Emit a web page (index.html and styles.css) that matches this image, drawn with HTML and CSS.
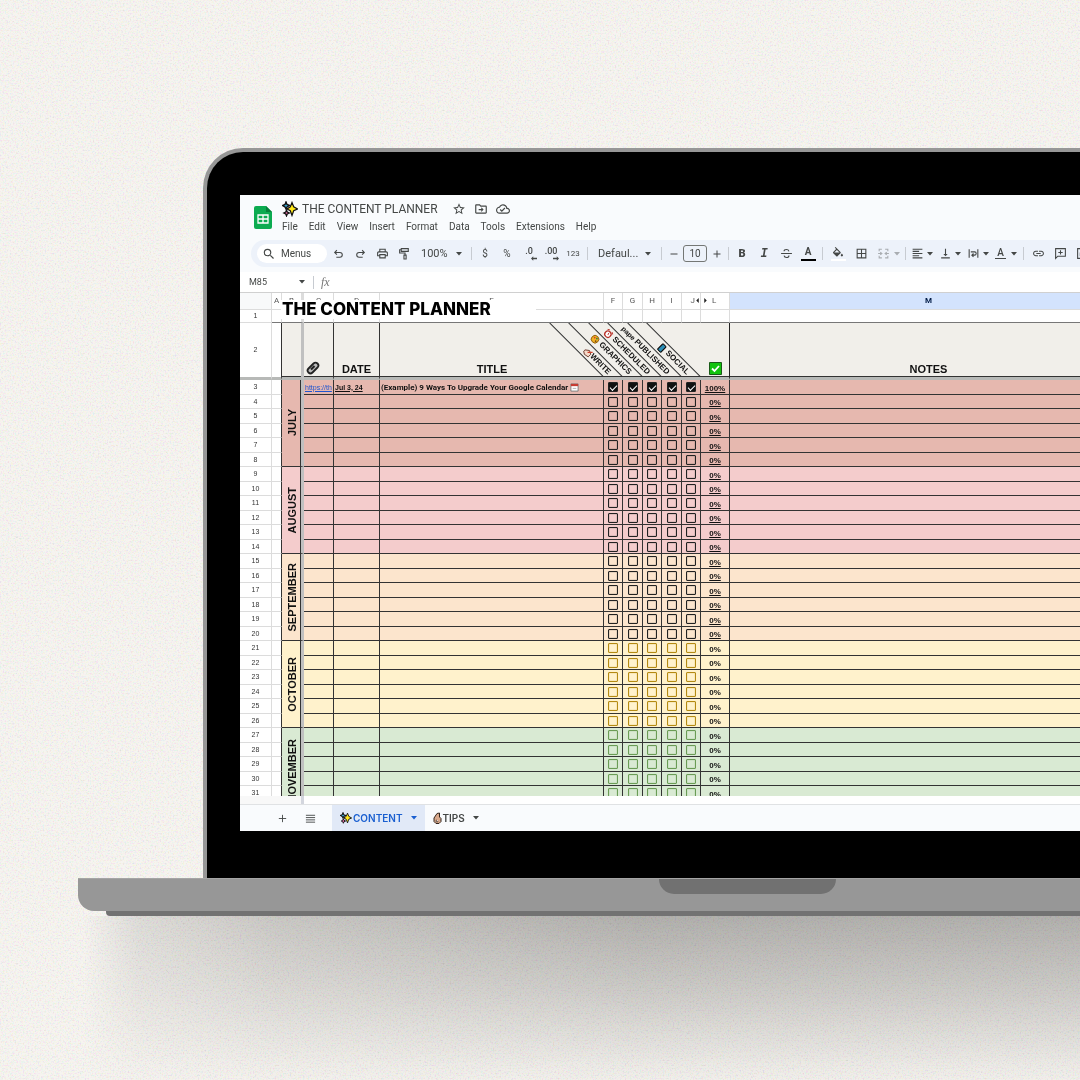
FILE: index.html
```html
<!DOCTYPE html>
<html lang="en">
<head>
<meta charset="utf-8">
<title>The Content Planner</title>
<link rel="stylesheet" href="styles.css">
</head>
<body>
<svg class="grain" aria-hidden="true">
  <filter id="grain" x="0" y="0" width="100%" height="100%" color-interpolation-filters="sRGB">
    <feTurbulence type="fractalNoise" baseFrequency="0.6" numOctaves="2" seed="4"/>
    <feColorMatrix values="1 0 0 0 0  0 1 0 0 0  0 0 1 0 0  0 0 0 0 1"/>
  </filter>
  <rect width="100%" height="100%" filter="url(#grain)"/>
</svg>

<svg class="defs" aria-hidden="true">
  <symbol id="caret" viewBox="0 0 6 4"><path d="M0 0h6L3 3.5z" fill="currentColor"/></symbol>
  <symbol id="sparkles" viewBox="0 0 16 16">
    <path d="M4 1l1 2.500 2.500 1L5 6 4 8 3 6 .5 4.500 3 3.500z" fill="#39a9d8" stroke="#111" stroke-width="1.400"/>
    <path d="M4.500 9l.8 2 2.200 1-2.200 1-.8 2-.8-2-2-1 2-1z" fill="#e86aa6" stroke="#111" stroke-width="1.200"/>
    <path d="M10 1.500l1.700 4.300L15.500 8l-3.800 1.700L10 14.500 8.300 9.700 5 8l3.300-2.200z" fill="#ffe81a" stroke="#111" stroke-width="1.200"/>
  </symbol>
</svg>

<main class="laptop">
  <div class="lid">
    <div class="screen">
      <header class="head">
        <svg class="logo" viewBox="0 0 18 23"><path d="M2 0h10l6 6v15a2 2 0 0 1-2 2H2a2 2 0 0 1-2-2V2a2 2 0 0 1 2-2z" fill="#0cab50"/><path d="M12 0l6 6h-6z" fill="#07813b"/><path d="M4 9h10v8H4zM9 9v8M4 13h10" fill="none" stroke="#fff" stroke-width="1.300"/></svg>
        <div class="head-main">
          <div class="title-row">
            <svg class="emoji-lg" aria-hidden="true"><use href="#sparkles"/></svg>
            <h1 class="doc-title">THE CONTENT PLANNER</h1>
            <button class="title-btn" aria-label="Star"><svg viewBox="0 0 24 24"><path d="M22 9.240l-7.190-.620L12 2 9.190 8.630 2 9.240l5.460 4.730L5.820 21 12 17.270 18.180 21l-1.630-7.030L22 9.240zM12 15.400l-3.760 2.270 1-4.280-3.320-2.880 4.380-.380L12 6.100l1.710 4.040 4.380.380-3.320 2.880 1 4.280L12 15.400z"/></svg></button>
            <button class="title-btn" aria-label="Move"><svg viewBox="0 0 24 24"><path d="M20 6h-8l-2-2H4c-1.100 0-2 .9-2 2v12c0 1.100.9 2 2 2h16c1.100 0 2-.9 2-2V8c0-1.100-.9-2-2-2zm0 12H4V6h5.170l2 2H20v10zm-7.500-1 4-4-4-4v3H8v2h4.500z"/></svg></button>
            <button class="title-btn" aria-label="Saved to Drive"><svg viewBox="0 0 24 24"><path d="M19.350 10.040C18.670 6.590 15.640 4 12 4 9.110 4 6.600 5.640 5.350 8.040 2.340 8.360 0 10.910 0 14c0 3.310 2.690 6 6 6h13c2.760 0 5-2.240 5-5 0-2.640-2.050-4.780-4.650-4.960zM19 18H6c-2.210 0-4-1.790-4-4 0-2.050 1.530-3.760 3.560-3.970l1.070-.110.5-.950C8.080 7.140 9.940 6 12 6c2.620 0 4.880 1.860 5.390 4.430l.3 1.500 1.530.110c1.560.1 2.780 1.410 2.780 2.960 0 1.650-1.350 3-3 3zm-9-3.820l-2.090-2.090L6.500 13.500 10 17l6.010-6.010-1.410-1.410z"/></svg></button>
          </div>
          <nav class="menu">
            <button>File</button><button>Edit</button><button>View</button><button>Insert</button><button>Format</button><button>Data</button><button>Tools</button><button>Extensions</button><button>Help</button>
          </nav>
        </div>
      </header>

      <div class="toolbar" role="toolbar" aria-label="Formatting">
        <button class="menus"><svg viewBox="0 0 24 24"><path d="M15.500 14h-.790l-.280-.270A6.470 6.470 0 0 0 16 9.500 6.500 6.500 0 1 0 9.500 16c1.610 0 3.090-.590 4.230-1.570l.270.280v.790l5 4.990L20.490 19l-4.990-5zm-6 0a4.500 4.500 0 1 1 0-9 4.500 4.500 0 0 1 0 9z"/></svg>Menus</button>
        <button class="tool" aria-label="Undo"><svg viewBox="0 0 24 24" class="line"><path d="M9 6L5 10l4 4M5 10h9.500a4.500 4.500 0 0 1 0 9H8"/></svg></button>
        <button class="tool" aria-label="Redo"><svg viewBox="0 0 24 24" class="line"><path d="M15 6l4 4-4 4M19 10H9.500a4.500 4.500 0 0 0 0 9H16"/></svg></button>
        <button class="tool" aria-label="Print"><svg viewBox="0 0 24 24"><path d="M19 8h-1V3H6v5H5c-1.660 0-3 1.340-3 3v6h4v4h12v-4h4v-6c0-1.660-1.340-3-3-3zM8 5h8v3H8V5zm8 12v2H8v-4h8v2zm2-2v-2H6v2H4v-4c0-.550.450-1 1-1h14c.550 0 1 .450 1 1v4h-2z"/></svg></button>
        <button class="tool" aria-label="Paint format"><svg viewBox="0 0 24 24" class="line"><path d="M6 3h13v5H6zM6 5H3v6h10v4M11 15h4v7h-4z"/></svg></button>
        <label class="pick pick-zoom"><select aria-label="Zoom"><option>100%</option></select><svg class="caret"><use href="#caret"/></svg></label>
        <span class="sep"></span>
        <button class="tool text-tool" aria-label="Currency">$</button>
        <button class="tool text-tool" aria-label="Percent">%</button>
        <button class="tool decimal" aria-label="Fewer decimals">.0<svg viewBox="0 0 8 6"><path d="M3 0L0 3l3 3V4h5V2H3z"/></svg></button>
        <button class="tool decimal" aria-label="More decimals">.00<svg viewBox="0 0 8 6"><path d="M5 0l3 3-3 3V4H0V2h5z"/></svg></button>
        <button class="tool small-tool" aria-label="More formats">123</button>
        <span class="sep wide"></span>
        <label class="pick pick-font"><select aria-label="Font"><option>Defaul...</option></select><svg class="caret"><use href="#caret"/></svg></label>
        <span class="sep"></span>
        <button class="tool step" aria-label="Decrease size"><svg viewBox="0 0 24 24" class="line"><path d="M5 12h14"/></svg></button>
        <input class="size" aria-label="Font size" value="10">
        <button class="tool step" aria-label="Increase size"><svg viewBox="0 0 24 24" class="line"><path d="M5 12h14M12 5v14"/></svg></button>
        <span class="sep"></span>
        <button class="tool bold" aria-label="Bold">B</button>
        <button class="tool italic" aria-label="Italic">I</button>
        <button class="tool" aria-label="Strikethrough"><svg viewBox="0 0 24 24" class="line"><path d="M2 12h20M16.500 8c-.5-2-2-3.500-4.500-3.500S7.500 6 7.500 8M7.500 16c.5 2.500 2 3.500 4.500 3.500s4.500-1.500 4.500-4"/></svg></button>
        <button class="tool color" aria-label="Text color">A</button>
        <span class="sep wide"></span>
        <button class="tool fill" aria-label="Fill color"><svg viewBox="0 0 24 18"><path d="M16.560 8.940L7.620 0 6.210 1.410l2.380 2.380-5.150 5.150c-.590.590-.590 1.540 0 2.120l5.500 5.500c.290.290.680.440 1.060.440s.770-.150 1.060-.440l5.500-5.500c.590-.580.590-1.530 0-2.120zM19 11.500s-2 2.170-2 3.500c0 1.100.9 2 2 2s2-.9 2-2c0-1.330-2-3.500-2-3.500zM10 5.210L5.210 10h9.580z" fill-rule="evenodd"/></svg></button>
        <button class="tool" aria-label="Borders"><svg viewBox="0 0 24 24"><path d="M3 3v18h18V3H3zm8 16H5v-6h6v6zm0-8H5V5h6v6zm8 8h-6v-6h6v6zm0-8h-6V5h6v6z"/></svg></button>
        <button class="tool merge" aria-label="Merge cells"><svg viewBox="0 0 24 24" class="line"><path d="M9 4H4v4M15 4h5v4M9 20H4v-4M15 20h5v-4M2 12h6M22 12h-6M6 9.500L9 12l-3 2.500M18 9.500L15 12l3 2.500"/></svg></button>
        <span class="caret-slot"><svg class="caret"><use href="#caret"/></svg></span>
        <span class="sep"></span>
        <button class="drop" aria-label="Horizontal align"><svg viewBox="0 0 24 24" class="line"><path d="M3 4h18M3 8h12M3 12h18M3 16h12M3 20h18"/></svg><svg class="caret"><use href="#caret"/></svg></button>
        <button class="drop" aria-label="Vertical align"><svg viewBox="0 0 24 24"><path d="M16 13h-3V3h-2v10H8l4 4 4-4zM4 19v2h16v-2H4z"/></svg><svg class="caret"><use href="#caret"/></svg></button>
        <button class="drop" aria-label="Text wrapping"><svg viewBox="0 0 24 24" class="line"><path d="M4 4v16M20 4v16M7 9h7a3 3 0 0 1 0 6H9M12 12l-3 3 3 3"/></svg><svg class="caret"><use href="#caret"/></svg></button>
        <button class="drop rotate" aria-label="Text rotation"><span>A</span><svg class="caret"><use href="#caret"/></svg></button>
        <span class="sep wide"></span>
        <button class="tool" aria-label="Insert link"><svg viewBox="0 0 24 24"><path d="M3.900 12c0-1.710 1.390-3.100 3.100-3.100h4V7H7c-2.760 0-5 2.240-5 5s2.240 5 5 5h4v-1.900H7c-1.710 0-3.100-1.390-3.100-3.100zM8 13h8v-2H8v2zm9-6h-4v1.900h4c1.710 0 3.100 1.390 3.100 3.100s-1.390 3.100-3.100 3.100h-4V17h4c2.760 0 5-2.240 5-5s-2.240-5-5-5z"/></svg></button>
        <button class="tool" aria-label="Insert comment"><svg viewBox="0 0 24 24" class="line"><path d="M3 21V3h18v14H7zM12 6v8M8 10h8"/></svg></button>
        <button class="tool" aria-label="Insert chart"><svg viewBox="0 0 24 24" class="line"><path d="M3 3h18v18H3zM8 10v7M12 7v10M16 13v4"/></svg></button>
      </div>

      <div class="formula">
        <input class="name-box" aria-label="Name box" value="M85">
        <svg class="caret"><use href="#caret"/></svg>
        <span class="sep"></span>
        <span class="fx">fx</span>
      </div>

      <div class="sheet">
        <table class="grid">
          <colgroup><col class="c-num"><col class="c-a"><col class="c-b"><col class="c-c"><col class="c-d"><col class="c-e"><col class="c-19"><col class="c-20"><col class="c-19"><col class="c-20"><col class="c-19"><col class="c-l"><col class="c-m"><col></colgroup>
          <thead>
            <tr class="letters"><th></th><th>A</th><th class="b">B</th><th>C</th><th>D</th><th>E</th><th>F</th><th>G</th><th>H</th><th>I</th><th class="j">J<svg class="tri" viewBox="0 0 3 6"><path d="M3 0v6L0 3z"/></svg></th><th class="l"><svg class="tri" viewBox="0 0 3 6"><path d="M0 0v6l3-3z"/></svg>L</th><th class="picked">M</th><th></th></tr>
            <tr class="first"><th class="num">1</th><td></td><td class="b"></td><td></td><td></td><td></td><td></td><td></td><td></td><td></td><td></td><td></td><td></td><td></td></tr>
            <tr class="names">
              <th class="num">2</th><td class="a"></td><td class="b"></td>
              <th class="clip"><svg viewBox="0 0 14 14" aria-label="Link"><path d="M2.500 7.500l5-5a2.800 2.800 0 0 1 4 4l-5 5a2.800 2.800 0 0 1-4-4z" fill="#bbb" stroke="#222" stroke-width="1.800"/><path d="M5 8.500L8.500 5" stroke="#222" stroke-width="2.200"/></svg></th>
              <th>DATE</th><th class="title-th">TITLE</th>
              <th class="slant"><span><svg viewBox="0 0 10 10"><path d="M1 5l4-3 4 2v4l-5 1-3-2z" fill="#f6d9c8" stroke="#6b3a2d"/><path d="M5 5l4-4" stroke="#d0402b" stroke-width="1.500"/></svg>WRITE</span></th>
              <th class="slant"><span><svg viewBox="0 0 10 10"><circle cx="5" cy="5" r="4.200" fill="#f2b223" stroke="#8a5a10"/><circle cx="3.500" cy="4" r="1" fill="#d7402b"/><circle cx="6" cy="3" r="1" fill="#3c7d3a"/><circle cx="7" cy="6" r="1" fill="#7a4a12"/></svg>&nbsp;GRAPHICS</span></th>
              <th class="slant"><span><svg viewBox="0 0 10 10"><circle cx="5" cy="5.500" r="3.500" fill="#fff" stroke="#b8322a" stroke-width="1.400"/><path d="M1 2l2-1.500M9 2L7 .5M5 3.500v2h1.500" stroke="#b8322a" fill="none"/></svg>&nbsp;SCHEDULED</span></th>
              <th class="slant"><span><small>pape&nbsp;</small>PUBLISHED</span></th>
              <th class="slant"><span><svg viewBox="0 0 10 10"><rect x="3" y=".5" width="5" height="9" rx="1" fill="#2a8fb8" stroke="#111" stroke-width="1.400"/></svg>&nbsp;SOCIAL</span></th>
              <th class="slant done"><svg viewBox="0 0 13 13" aria-label="Done"><path d="M.5.5h12v12H.5z" fill="#12c20e" stroke="#1a5a18"/><path d="M3 6.500l2.500 2.500L10 4" fill="none" stroke="#fff" stroke-width="1.800"/></svg></th>
              <th>NOTES</th><th></th>
            </tr>
          </thead>
          <tbody id="rows"></tbody>
        </table>
        <div class="banner">THE CONTENT PLANNER</div>
      </div>
      <div class="scroll-strip"><span></span></div>

      <footer class="tabs">
        <button class="tab-icon" aria-label="Add sheet"><svg viewBox="0 0 24 24" class="line"><path d="M4 12h16M12 4v16"/></svg></button>
        <button class="tab-icon" aria-label="All sheets"><svg viewBox="0 0 24 24" class="line"><path d="M2 5h20M2 10h20M2 15h20M2 20h20"/></svg></button>
        <button class="tab active"><svg class="emoji-sm"><use href="#sparkles"/></svg>CONTENT<svg class="caret"><use href="#caret"/></svg></button>
        <button class="tab"><svg class="bulb" viewBox="0 0 9 12"><path d="M4 1.500L6.500 1v4L8 6.500v3L6 11.500H3L1 9.500V6z" fill="#d9a98c" stroke="#33241c"/><path d="M4 8a1 1 0 1 0 1 1" fill="#fff" stroke="#33241c" stroke-width=".8"/></svg>TIPS<svg class="caret"><use href="#caret"/></svg></button>
      </footer>
    </div>
  </div>
  <div class="base"><div class="notch"></div></div>
  <div class="foot"></div>
  <div class="shadow"></div>
</main>
<script src="app.js"></script>
</body>
</html>
```
FILE: app.js
```js
// Six planner rows per month, starting at sheet row 3.
const months = ["july", "august", "september", "october", "november"];
const stages = ["Write", "Graphics", "Scheduled", "Published", "Social"];
const calendar = '<svg class="cal" viewBox="0 0 10 10"><path d="M1 1h8v8H1z" fill="#fff" stroke="#777"/><path d="M1 1h8v2.500H1z" fill="#c63b32"/><path d="M3 6h4" stroke="#aaa"/></svg>';

const rows = [];
months.forEach((month, m) => {
  for (let i = 0; i < 6; i++) {
    const n = 3 + m * 6 + i;
    const sample = n === 3;
    const boxes = stages.map(s =>
      `<td><input type="checkbox" aria-label="${s}, row ${n}"${sample ? " checked" : ""}></td>`).join("");
    rows.push(`<tr class="${month}">
      <th class="num">${n}</th><td class="a"></td>
      ${i === 0 ? `<th class="b month" rowspan="6"><span>${month.toUpperCase()}</span></th>` : ""}
      <td class="url">${sample ? '<a href="#">https://th</a>' : ""}</td>
      <td class="date">${sample ? "Jul 3, 24" : ""}</td>
      <td class="name">${sample ? "(Example) 9 Ways To Upgrade Your Google Calendar " + calendar : ""}</td>
      ${boxes}
      <td class="pct">${sample ? "100%" : "0%"}</td><td></td><td></td>
    </tr>`);
  }
});
document.getElementById("rows").innerHTML = rows.join("");
```
FILE: styles.css
```css
* { box-sizing: border-box; }
body {
  margin: 0;
  min-height: 100vh;
  overflow: hidden;
  position: relative;
  background: #f6f4f0;
  font-family: Roboto, "Liberation Sans", sans-serif;
  color: #444746;
}
button, input, select {
  margin: 0;
  padding: 0;
  border: 0;
  background: none;
  color: inherit;
  font: inherit;
}
svg { fill: currentColor; flex: none; display: block; }
.line { fill: none; stroke: currentColor; stroke-width: 2; }
.defs { position: absolute; width: 0; height: 0; }
.grain {
  position: absolute;
  inset: 0;
  width: 100%;
  height: 100%;
  mix-blend-mode: hard-light;
  opacity: .15;
}

/* Laptop */
.laptop { position: relative; width: 124%; padding-top: 148px; margin-left: 78px; }
.lid {
  margin: 0 125px;
  padding: 43px 33px 47px;
  border: 4px solid #979797;
  border-bottom: 0;
  border-radius: 40px 40px 0 0;
  background: #000;
}
.screen { background: #f9fbfd; overflow: hidden; }
.base {
  display: flex;
  justify-content: center;
  height: 33px;
  border-radius: 0 0 16px 16px;
  background: #979797;
  border-top: 1px solid #a5a5a5;
}
.notch { width: 177px; height: 15px; border-radius: 0 0 15px 15px; background: #717171; }
.foot { margin: 0 28px; height: 5px; border-radius: 0 0 4px 4px; background: #727272; }
.shadow {
  height: 165px;
  background: linear-gradient(rgba(0, 0, 0, .28), rgba(0, 0, 0, .17) 45%, rgba(0, 0, 0, .04) 90%, rgba(0, 0, 0, .02));
  -webkit-mask-image: linear-gradient(90deg, transparent 5px, rgba(0, 0, 0, .35) 60px, rgba(0, 0, 0, .65) 200px, #000 560px);
  mask-image: linear-gradient(90deg, transparent 5px, rgba(0, 0, 0, .35) 60px, rgba(0, 0, 0, .65) 200px, #000 560px);
}

/* Document header */
.head { display: flex; gap: 10px; padding: 6px 14px; height: 45px; }
.logo { width: 18px; height: 23px; margin-top: 5px; }
.title-row { display: flex; align-items: center; height: 16px; }
.emoji-lg { width: 16px; height: 16px; margin-right: 4px; }
.doc-title { margin: 0 14px 0 0; font-size: 12px; font-weight: 400; line-height: 16px; }
.title-btn { width: 14px; height: 14px; margin-right: 8px; }
.title-btn svg { width: 14px; height: 14px; }
.menu { display: flex; gap: 11px; height: 16px; margin-top: 2px; font-size: 10px; line-height: 16px; }

/* Toolbar */
.toolbar {
  display: flex;
  align-items: center;
  height: 27px;
  margin: 0 11px 5px;
  padding-left: 6px;
  border-radius: 14px;
  background: #edf2fa;
  font-size: 10px;
}
.toolbar > * { flex: none; }
.menus {
  display: flex;
  align-items: center;
  gap: 5px;
  width: 70px;
  height: 19px;
  padding-left: 5px;
  border-radius: 10px;
  background: #fff;
}
.menus svg { width: 14px; height: 14px; }
.tool { display: flex; align-items: center; justify-content: center; width: 22px; height: 20px; }
.tool svg { width: 13px; height: 13px; }
.sep { width: 1px; height: 13px; margin: 0 2px; background: #c7cbd1; }
.sep.wide { margin: 0 3px; }
.caret { width: 6px; height: 4px; }
.pick { display: flex; align-items: center; padding-left: 6px; }
.pick select { appearance: none; }
.pick-zoom { width: 54px; font-size: 11px; }
.pick-zoom select { width: 35px; }
.pick-font { width: 68px; font-size: 11px; padding-left: 7px; }
.pick-font select { width: 47px; }
.small-tool { font-size: 8px; }
.decimal { position: relative; align-items: flex-start; padding-top: 2px; font-size: 9px; font-weight: 500; }
.decimal svg { position: absolute; right: 3px; bottom: 3px; width: 6px; height: 5px; }
.step { width: 19px; }
.step svg { width: 12px; height: 12px; }
.size { width: 24px; height: 17px; border: 1px solid #747775; border-radius: 3px; text-align: center; }
.bold { font-size: 11px; font-weight: 900; }
.italic { font: italic 700 12px "Liberation Mono", monospace; }
.color { align-items: flex-start; font-size: 10px; line-height: 15px; font-weight: 700; position: relative; }
.color::after { content: ""; position: absolute; bottom: 3px; width: 15px; height: 2px; background: #000; }
.fill { width: 24px; flex-direction: column; gap: 2px; }
.fill svg { width: 14px; height: 10px; }
.fill::after { content: ""; width: 15px; height: 2px; background: #fff; }
.merge, .caret-slot { color: #a9adb1; }
.caret-slot { width: 9px; }
.drop { display: flex; align-items: center; gap: 3px; width: 28px; height: 20px; padding-left: 3px; }
.drop svg:first-child { width: 13px; height: 13px; }
.drop svg.caret { width: 6px; height: 4px; }
.rotate span { width: 11px; margin-right: 2px; border-bottom: 1px solid; font-size: 10px; font-weight: 500; line-height: 10px; }

/* Formula bar */
.formula {
  display: flex;
  align-items: center;
  height: 21px;
  padding-left: 9px;
  border-bottom: 1px solid #d0d0d0;
  background: #fff;
}
.name-box { width: 50px; font-size: 9px; }
.formula .sep { margin: 0 7px 0 8px; }
.fx { font: italic 12px "Liberation Serif", serif; color: #777; }

/* Sheet */
.sheet { position: relative; max-height: 503px; overflow: hidden; background: #fff; }
.grid {
  width: 100%;
  table-layout: fixed;
  border-collapse: separate;
  border-spacing: 0;
  font-family: "Liberation Sans", sans-serif;
  font-size: 8px;
  font-weight: 700;
  line-height: 11px;
  color: #111;
}
.c-num { width: 32px; }
.c-a { width: 10px; }
.c-b { width: 22px; }
.c-c { width: 30px; }
.c-d { width: 46px; }
.c-e { width: 224px; }
.c-19 { width: 19px; }
.c-20 { width: 20px; }
.c-l { width: 29px; }
.c-m { width: 398px; }
.grid td, .grid th {
  padding: 0;
  border-right: 1px solid #333;
  border-bottom: 1px solid #333;
  overflow: hidden;
  white-space: nowrap;
  text-align: center;
}
.grid .letters th, .grid .first td {
  border-color: #dcdcdc;
}
.grid .letters th { height: 17px; font: 400 8px/16px Roboto, sans-serif; color: #555; }
.grid .letters th:first-child { background: #f8f9fa; }
.grid .letters .picked { background: #d3e3fd; color: #041e49; font-weight: 700; }
.tri { display: inline-block; width: 3px; height: 5px; margin: 0 1px; fill: #222; }
.l .tri { margin-right: 5px; }
.grid .j { text-align: right; }
.grid .l { text-align: left; padding-left: 2px; }
.first td { height: 13px; }
.grid .first td { border-bottom-color: #777; }
.grid .num {
  border-color: #dcdcdc;
  background: #fff;
  font: 400 7px/12px "Liberation Sans", sans-serif;
  color: #333;
}
.grid .a { border-bottom-color: #dcdcdc; background: #fff; }
.grid .b { border-right: 3px solid #c0c0c0; }
.names th, .names td { height: 57px; background: #f1efea; }
.grid .names th, .grid .names td {
  vertical-align: bottom;
  font-size: 11px;
  line-height: 16px;
  border-bottom: 3px solid #b7b9b7;
  box-shadow: inset 0 -1px #333;
}
.grid .names .num { vertical-align: middle; font-size: 7px; background: #fff; box-shadow: none; }
.grid .names .a { background: #fff; box-shadow: none; }
.names .b, .grid .month { box-shadow: inset -1px 0 #333; }
.clip svg { width: 14px; height: 14px; margin: 0 0 2px 2px; }

/* Slanted stage names: each cell owns the rule that meets its left corner */
.grid .names .title-th { border-right: 0; }
.grid .names .slant {
  position: relative;
  overflow: visible;
  border-right: 0;
  clip-path: inset(0 0 0 -100px);
}
.grid .names .done { border-right: 1px solid #222; }
.slant::before {
  content: "";
  position: absolute;
  left: -77px;
  bottom: 0;
  width: 76px;
  height: 1px;
  background: #333;
  transform-origin: 100% 100%;
  transform: rotate(45deg);
}
.slant span {
  position: absolute;
  right: 17px;
  bottom: 0;
  display: flex;
  align-items: center;
  font-size: 8px;
  line-height: 10px;
  transform-origin: 100% 100%;
  transform: rotate(45deg);
}
.slant small { font-size: 7px; }
.slant span svg { width: 9px; height: 9px; }
.done svg { width: 13px; height: 13px; margin: 0 auto 2px; }

/* Planner rows */
tbody tr { height: 14px; }
tbody tr:nth-child(odd) { height: 15px; }
.july { background: #e6b8af; }
.august { background: #f4cccc; }
.september { background: #fce5cd; }
.october { background: #fff2cc; --box: #b48a12; }
.november { background: #d9ead3; --box: #6a9c55; }
.month span {
  display: block;
  margin: 0 auto;
  writing-mode: vertical-rl;
  transform: rotate(180deg);
  font-size: 11px;
  line-height: 18px;
}
.grid .url { padding-left: 1px; text-align: left; font-size: 7px; font-weight: 400; }
.url a { color: #1f55d0; }
.grid .date, .grid .name { padding-left: 1px; text-align: left; }
.grid .pct { padding-top: 2px; }
.date { font-size: 7px; }
.name { font-family: Roboto, sans-serif; }
.date, .pct { text-decoration: underline; }
.october .pct, .november .pct { text-decoration: none; }
.cal { display: inline-block; width: 9px; height: 9px; vertical-align: -2px; }
input[type="checkbox"] {
  appearance: none;
  display: block;
  width: 10px;
  height: 10px;
  margin: 0 auto;
  border: 1px solid var(--box, #222);
  border-radius: 1px;
  box-shadow: inset 0 0 1px var(--box, #222);
}
input[type="checkbox"]:checked {
  background: #111;
}
input[type="checkbox"]:checked::before {
  content: "";
  display: block;
  width: 6px;
  height: 3px;
  margin: 2px 1px;
  border: solid #fff;
  border-width: 0 0 1px 1px;
  transform: rotate(-45deg);
}
.banner {
  position: absolute;
  left: 41px;
  top: 7px;
  width: 255px;
  padding: 1px 0 1px 1px;
  background: #fff;
  color: #000;
  font: 800 17px/17px Inter, sans-serif;
  white-space: nowrap;
}
.scroll-strip { display: flex; height: 9px; padding-left: 61px; border-bottom: 1px solid #e0e2e4; background: linear-gradient(90deg, #f8f8f8 61px, #fff 61px); }
.scroll-strip span { width: 3px; background: #d3d6de; }

/* Sheet tabs */
.tabs { display: flex; height: 26px; padding-left: 28px; font-size: 10px; font-weight: 500; }
.tab-icon { display: flex; align-items: center; justify-content: center; width: 28px; }
.tab-icon svg { width: 11px; height: 11px; }
.tab { display: flex; align-items: center; padding: 0 8px; font-family: Inter, sans-serif; font-weight: 600; }
.tab .caret { margin-left: 8px; }
.tab.active { margin-left: 8px; background: #e1e9f7; color: #1a5fd0; }
.emoji-sm { width: 12px; height: 12px; margin-right: 1px; }
.bulb { width: 9px; height: 12px; margin-right: 1px; }
```
